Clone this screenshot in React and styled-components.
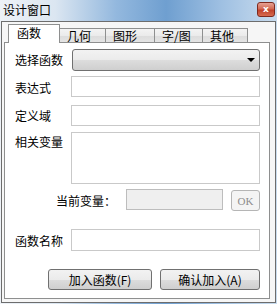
import React from 'react';
import styled, { createGlobalStyle } from 'styled-components';

const Global = createGlobalStyle`
    body {
        margin: 0;
        background: #ffffff;
        font-family: "Noto Sans CJK SC", "Noto Sans", sans-serif;
        font-size: 12px;
        color: #000;
    }
`;

const Window = styled.div`
    width: 277px;
    height: 304px;
    display: flex;
    flex-direction: column;
    background: linear-gradient(90deg, #eef2f7 0%, #dbe6f1 20%, #93b8de 42%, #6f9fd0 60%, #9fc0e2 80%, #c9dcee 100%);
`;

const TitleBar = styled.div`
    height: 21px;
    display: flex;
    align-items: center;
    justify-content: space-between;
    padding: 0 2px 0 3px;
`;

const Title = styled.span`
    font-size: 12px;
    line-height: 12px;
    margin-top: -1px;
`;

const Close = styled.div`
    width: 16px;
    height: 13px;
    margin-top: -3px;
    border: 1px solid #7e2a1f;
    border-radius: 3px;
    background: linear-gradient(180deg, #e6a193 0%, #d36a55 45%, #c0422c 55%, #d76b4f 100%);
    color: #fff;
    font-family: "DejaVu Sans", sans-serif;
    font-weight: bold;
    font-size: 9px;
    line-height: 13px;
    text-align: center;
`;

const Frame = styled.div`
    flex: 1;
    margin: 0 1px 1px 1px;
    border: 1px solid #6d6d6d;
    background: #f6f6f6;
    padding: 2px 5px 3px 2px;
    display: flex;
    flex-direction: column;
`;

const TabStrip = styled.div`
    display: flex;
    align-items: flex-end;
    height: 19px;
    padding-left: 4px;
    position: relative;
    z-index: 1;
    margin-bottom: -1px;
`;

const Tab = styled.div`
    width: ${p => p.$w}px;
    height: ${p => (p.$active ? 19 : 15)}px;
    box-sizing: border-box;
    border: 1px solid #8e8f8f;
    border-bottom: ${p => (p.$active ? 'none' : '1px solid #8e8f8f')};
    margin-left: ${p => (p.$first ? 0 : -1)}px;
    background: ${p => (p.$active ? '#ffffff' : 'linear-gradient(180deg, #f3f3f3 0%, #ebebeb 50%, #dcdcdc 51%, #e4e4e4 100%)')};
    padding-left: ${p => (p.$active ? 8 : 7)}px;
    font-size: 12px;
    line-height: ${p => (p.$active ? 15 : 13)}px;
`;

const Panel = styled.div`
    flex: 1;
    border: 1px solid #8e8f8f;
    background: #ffffff;
    padding: 5px 9px 0 10px;
    display: grid;
    grid-template-columns: 56px 1fr;
    grid-auto-rows: min-content;
    align-content: start;
`;

const Label = styled.div`
    display: flex;
    align-items: ${p => (p.$top ? 'flex-start' : 'center')};
    padding-top: ${p => (p.$top ? 1 : 0)}px;
    margin-top: ${p => p.$mt || 0}px;
`;

const Select = styled.div`
    height: 22px;
    box-sizing: border-box;
    border: 1px solid #707070;
    border-radius: 3px;
    background: linear-gradient(180deg, #f2f2f2 0%, #ebebeb 50%, #dddddd 51%, #cfcfcf 100%);
    display: flex;
    align-items: center;
    justify-content: flex-end;
    padding-right: 4px;
    margin: 1px 0 0 1px;
`;

const Arrow = styled.div`
    width: 0;
    height: 0;
    border-left: 4px solid transparent;
    border-right: 4px solid transparent;
    border-top: 4px solid #000;
`;

const Input = styled.div`
    height: ${p => p.$h || 21}px;
    box-sizing: border-box;
    border: 1px solid #c9c9c9;
    background: #fff;
    margin-top: ${p => p.$mt || 0}px;
`;

const VarRow = styled.div`
    grid-column: 1 / span 2;
    display: flex;
    justify-content: flex-end;
    align-items: center;
    margin-top: 6px;
`;

const VarLabel = styled.span`
    margin-right: 10px;
`;

const DisabledInput = styled.div`
    width: 97px;
    height: 21px;
    box-sizing: border-box;
    border: 1px solid #bdbdbd;
    background: #efefef;
    margin-top: -2px;
`;

const OkButton = styled.div`
    width: 29px;
    height: 21px;
    box-sizing: border-box;
    margin-left: 8px;
    border: 1px solid #b5b5b5;
    border-radius: 3px;
    background: #f4f4f4;
    color: #8d8d8d;
    font-family: "Liberation Serif", serif;
    font-size: 11px;
    display: flex;
    align-items: center;
    justify-content: center;
`;

const ButtonRow = styled.div`
    grid-column: 1 / span 2;
    display: flex;
    justify-content: flex-end;
    gap: 8px;
    margin-top: 18px;
`;

const Button = styled.div`
    width: ${p => p.$w}px;
    height: 21px;
    box-sizing: border-box;
    border: 1px solid #707070;
    border-radius: 3px;
    background: linear-gradient(180deg, #f2f2f2 0%, #ebebeb 50%, #dddddd 51%, #cfcfcf 100%);
    display: flex;
    align-items: center;
    justify-content: center;
    font-size: 12px;
`;

const tabs = [
    { name: '函数', w: 52 },
    { name: '几何', w: 47 },
    { name: '图形', w: 50 },
    { name: '字/图', w: 49 },
    { name: '其他', w: 46 },
];

export default function App() {
    return (
        <>
            <Global />
            <Window>
                <TitleBar>
                    <Title>设计窗口</Title>
                    <Close>x</Close>
                </TitleBar>
                <Frame>
                    <TabStrip>
                        {tabs.map((t, i) => (
                            <Tab key={t.name} $w={t.w} $active={i === 0} $first={i === 0}>{t.name}</Tab>
                        ))}
                    </TabStrip>
                    <Panel>
                        <Label>选择函数</Label>
                        <Select><Arrow /></Select>

                        <Label $mt={6}>表达式</Label>
                        <Input $mt={5} />

                        <Label $mt={8}>定义域</Label>
                        <Input $mt={8} />

                        <Label $top $mt={6}>相关变量</Label>
                        <Input $mt={6} $h={52} />

                        <VarRow>
                            <VarLabel>当前变量：</VarLabel>
                            <DisabledInput />
                            <OkButton>OK</OkButton>
                        </VarRow>

                        <Label $mt={18}>函数名称</Label>
                        <Input $mt={18} $h={22} />

                        <ButtonRow>
                            <Button $w={104}>加入函数(F)</Button>
                            <Button $w={100}>确认加入(A)</Button>
                        </ButtonRow>
                    </Panel>
                </Frame>
            </Window>
        </>
    );
}
